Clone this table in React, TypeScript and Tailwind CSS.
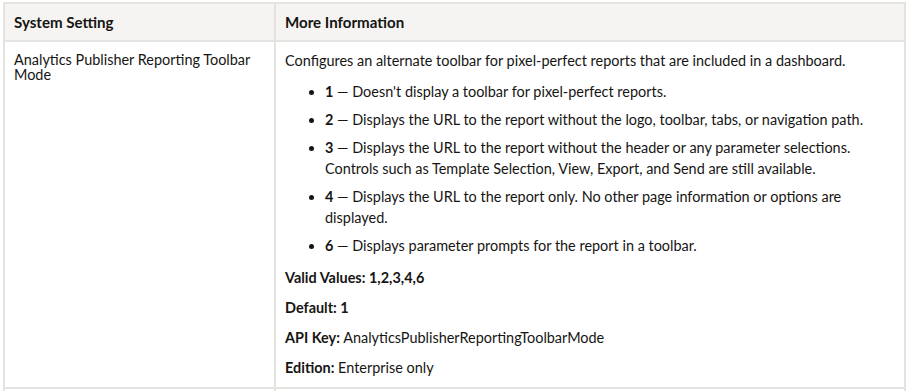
const options = [
  { value: '1', text: "Doesn't display a toolbar for pixel-perfect reports." },
  { value: '2', text: 'Displays the URL to the report without the logo, toolbar, tabs, or navigation path.' },
  {
    value: '3',
    text: 'Displays the URL to the report without the header or any parameter selections. Controls such as Template Selection, View, Export, and Send are still available.',
  },
  { value: '4', text: 'Displays the URL to the report only. No other page information or options are displayed.' },
  { value: '6', text: 'Displays parameter prompts for the report in a toolbar.' },
]

export default function App() {
  return (
    <div
      className="h-[391px] overflow-hidden bg-white pl-[3px] pt-[2px] text-[14.45px] text-[#161513]"
      style={{ fontFamily: 'Lato, "Open Sans", sans-serif' }}
    >
      <table className="w-[903px] border-collapse table-fixed">
        <thead>
          <tr className="bg-[#f5f4f2]">
            <th className="w-[271px] border-2 border-[#e4e3df] px-[9px] h-[38px] text-left text-[15.1px] font-bold">
              System Setting
            </th>
            <th className="border-2 border-[#e4e3df] px-[9px] text-left text-[15.1px] font-bold">More Information</th>
          </tr>
        </thead>
        <tbody>
          <tr>
            <td className="border-2 border-[#e4e3df] px-[9px] pt-[10px] align-top leading-[15px]">
              Analytics Publisher Reporting Toolbar Mode
            </td>
            <td className="border-2 border-[#e4e3df] px-[9px] pt-[8px] pb-[2px] align-top leading-[21px]">
              <p className="mb-[10px]">
                Configures an alternate toolbar for pixel-perfect reports that are included in a dashboard.
              </p>
              <ul className="list-disc pl-[40px] mb-[11px]">
                {options.map((o) => (
                  <li key={o.value} className="mb-[7px]">
                    <b>{o.value}</b> — {o.text}
                  </li>
                ))}
              </ul>
              <p className="mb-[9px] font-bold">Valid Values: 1,2,3,4,6</p>
              <p className="mb-[9px] font-bold">Default: 1</p>
              <p className="mb-[9px]">
                <b>API Key:</b> AnalyticsPublisherReportingToolbarMode
              </p>
              <p className="mb-[7px]">
                <b>Edition:</b> Enterprise only
              </p>
            </td>
          </tr>
          <tr>
            <td className="border-2 border-[#e4e3df] h-[20px]" />
            <td className="border-2 border-[#e4e3df]" />
          </tr>
        </tbody>
      </table>
    </div>
  )
}
